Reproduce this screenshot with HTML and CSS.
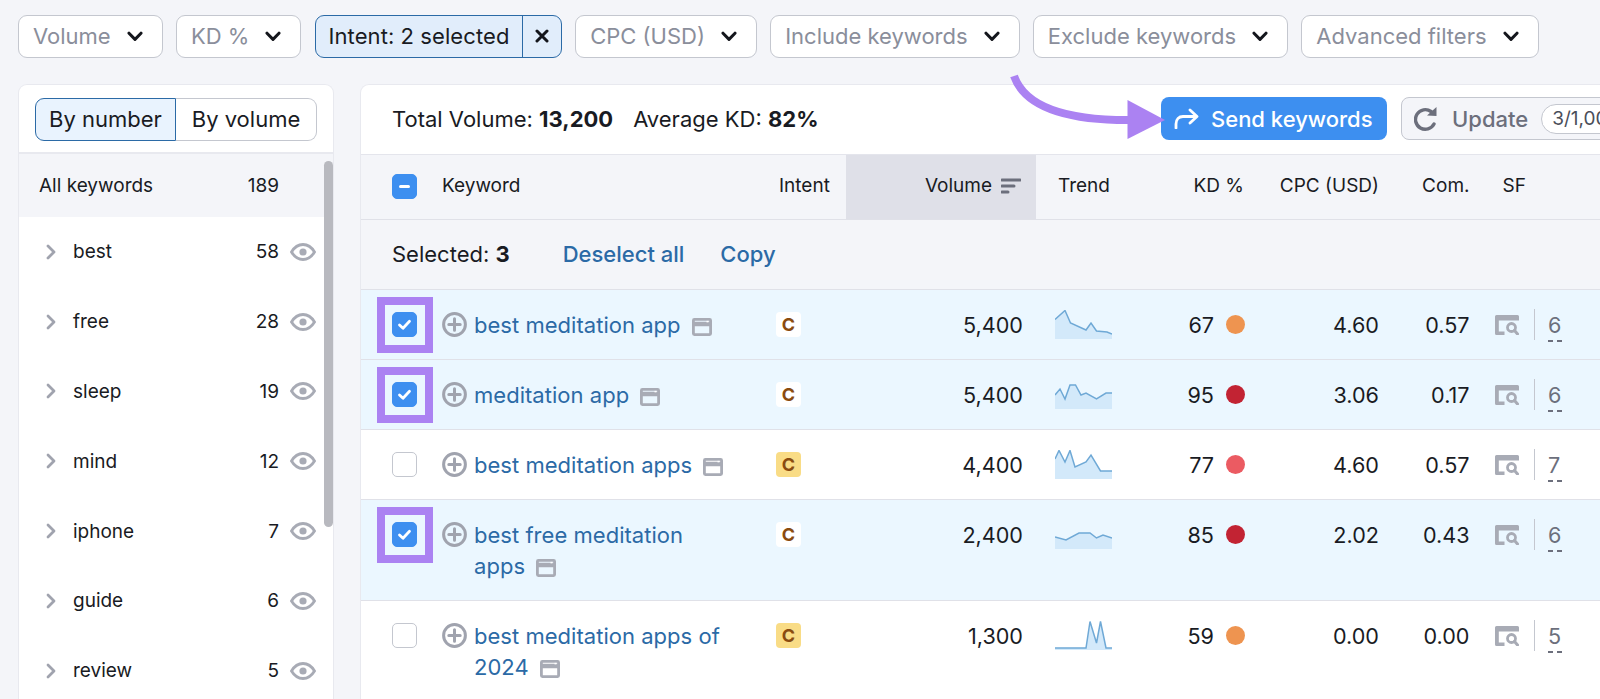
FILE: index.html
```html
<!DOCTYPE html>
<html lang="en">
<head>
<meta charset="utf-8">
<title>Keyword Magic Tool</title>
<link rel="stylesheet" href="styles.css">
</head>
<body>
<svg class="defs" width="0" height="0" aria-hidden="true">
  <symbol id="chev" viewBox="0 0 16 11"><path d="M2 2.200 8 8.400l6-6.200" fill="none" stroke="currentColor" stroke-width="3" stroke-linecap="round" stroke-linejoin="round"/></symbol>
  <symbol id="right" viewBox="0 0 10 16"><path d="M2 2l6 6-6 6" fill="none" stroke="currentColor" stroke-width="2.800" stroke-linecap="round" stroke-linejoin="round"/></symbol>
  <symbol id="eye" viewBox="0 0 26 18"><path d="M1.500 9C4.500 4 8.500 1.500 13 1.500S21.500 4 24.500 9C21.500 14 17.500 16.500 13 16.500S4.500 14 1.500 9Z" fill="none" stroke="currentColor" stroke-width="2.800"/><circle cx="13" cy="9" r="3.600" fill="currentColor"/></symbol>
  <symbol id="plus" viewBox="0 0 25 25"><circle cx="12.500" cy="12.500" r="10.900" fill="none" stroke="currentColor" stroke-width="3"/><path d="M12.500 6.800v11.400M6.800 12.500h11.400" stroke="currentColor" stroke-width="3" stroke-linecap="round"/></symbol>
  <symbol id="win" viewBox="0 0 20 18"><rect x="1.400" y="1.400" width="17.200" height="15.200" rx="1" fill="none" stroke="currentColor" stroke-width="2.800"/><path d="M1 6h18" stroke="currentColor" stroke-width="4.500"/><path d="M14.500 3.600h2" stroke="#fff" stroke-width="1.500"/></symbol>
  <symbol id="serp" viewBox="0 0 24 20"><path d="M0 1.500A1.500 1.500 0 0 1 1.500 0h21A1.500 1.500 0 0 1 24 1.500V5.500H3.800v10.900H9.500V20H1.500A1.500 1.500 0 0 1 0 18.500Z" fill="currentColor"/><circle cx="16.500" cy="12.500" r="4" fill="none" stroke="currentColor" stroke-width="2.800"/><path d="M19.500 15.500l3 3.500" stroke="currentColor" stroke-width="3" stroke-linecap="round"/></symbol>
  <symbol id="tick" viewBox="0 0 25 25"><path d="M7.500 13l3.500 3.300 6.500-7" fill="none" stroke="#fff" stroke-width="2.800" stroke-linecap="round" stroke-linejoin="round"/></symbol>
</svg>

<div class="page">
  <header class="filters">
    <div class="filter"><span>Volume</span><svg class="chev"><use href="#chev"/></svg></div>
    <div class="filter"><span>KD %</span><svg class="chev"><use href="#chev"/></svg></div>
    <div class="filter filter-on"><span class="on-label">Intent: 2 selected</span><span class="on-clear"><svg class="x" viewBox="0 0 14 14"><path d="M2 2l10 10M12 2 2 12" stroke="#14161c" stroke-width="3" stroke-linecap="round"/></svg></span></div>
    <div class="filter"><span>CPC (USD)</span><svg class="chev"><use href="#chev"/></svg></div>
    <div class="filter"><span>Include keywords</span><svg class="chev"><use href="#chev"/></svg></div>
    <div class="filter"><span>Exclude keywords</span><svg class="chev"><use href="#chev"/></svg></div>
    <div class="filter"><span>Advanced filters</span><svg class="chev"><use href="#chev"/></svg></div>
  </header>

  <div class="columns">
    <aside class="side">
      <div class="side-top">
        <div class="seg seg-on">By number</div>
        <div class="seg">By volume</div>
      </div>
      <div class="side-all"><span class="side-all-name">All keywords</span><span class="side-all-num">189</span></div>
      <div class="side-row"><svg class="side-chev"><use href="#right"/></svg><span class="side-name">best</span><span class="side-num">58</span><svg class="eye"><use href="#eye"/></svg></div>
      <div class="side-row"><svg class="side-chev"><use href="#right"/></svg><span class="side-name">free</span><span class="side-num">28</span><svg class="eye"><use href="#eye"/></svg></div>
      <div class="side-row"><svg class="side-chev"><use href="#right"/></svg><span class="side-name">sleep</span><span class="side-num">19</span><svg class="eye"><use href="#eye"/></svg></div>
      <div class="side-row"><svg class="side-chev"><use href="#right"/></svg><span class="side-name">mind</span><span class="side-num">12</span><svg class="eye"><use href="#eye"/></svg></div>
      <div class="side-row"><svg class="side-chev"><use href="#right"/></svg><span class="side-name">iphone</span><span class="side-num">7</span><svg class="eye"><use href="#eye"/></svg></div>
      <div class="side-row"><svg class="side-chev"><use href="#right"/></svg><span class="side-name">guide</span><span class="side-num">6</span><svg class="eye"><use href="#eye"/></svg></div>
      <div class="side-row"><svg class="side-chev"><use href="#right"/></svg><span class="side-name">review</span><span class="side-num">5</span><svg class="eye"><use href="#eye"/></svg></div>
      <div class="scroll-thumb"></div>
    </aside>

    <main class="main">
      <div class="summary">
        <span class="sum-a">Total Volume: <b>13,200</b></span>
        <span class="sum-b">Average KD: <b>82%</b></span>
        <div class="summary-actions">
          <button class="send">
            <svg class="send-ico" viewBox="0 0 25 21"><path d="M2 20v-4c0-5 3-7.500 7-7.500h13M16 2l7 6.500-7 6.500" fill="none" stroke="#fff" stroke-width="2.800" stroke-linecap="round" stroke-linejoin="round"/></svg>
            Send keywords
          </button>
          <button class="update">
            <svg class="upd-ico" viewBox="0 0 24 26"><path d="M20 18a9.800 9.800 0 1 1-3-12.500" fill="none" stroke="#6c6f7c" stroke-width="3.400" stroke-linecap="round"/><path d="M13 9.500 22.500 10V1Z" fill="#6c6f7c"/></svg>
            <span class="upd-text">Update</span>
            <span class="upd-pill">3/1,000</span>
          </button>
        </div>
      </div>

      <div class="grid grid-head">
        <div class="c-check"><span class="box box-on"><i class="minus"></i></span></div>
        <div class="c-kw">Keyword</div>
        <div class="c-int">Intent</div>
        <div class="c-vol c-sorted">Volume <svg class="sort" viewBox="0 0 20 16"><path d="M1 2h18M1 8h12M1 14h6" stroke="#6c6f7c" stroke-width="3" stroke-linecap="round"/></svg></div>
        <div class="c-trend">Trend</div>
        <div class="c-kd">KD %</div>
        <div class="c-cpc">CPC (USD)</div>
        <div class="c-com">Com.</div>
        <div class="c-sf">SF</div>
      </div>

      <div class="selbar">
        <span class="sel-count">Selected: <b>3</b></span>
        <a class="sel-link">Deselect all</a>
        <a class="sel-link">Copy</a>
      </div>

      <div class="grid row row-sel">
        <div class="c-check"><span class="hilite"></span><span class="box box-on"><svg class="tick"><use href="#tick"/></svg></span></div>
        <div class="c-kw"><svg class="plus"><use href="#plus"/></svg><a class="kw">best meditation app <svg class="win"><use href="#win"/></svg></a></div>
        <div class="c-int"><span class="badge">C</span></div>
        <div class="c-vol">5,400</div>
        <div class="c-trend"><svg class="spark" viewBox="0 0 57 29"><path class="area" d="M0 9.500 10 .5l5.500 12.500L31 20l5-7 5.500 8L52 22l5 2v5H0Z"/><path class="line" d="M0 9.500 10 .5l5.500 12.500L31 20l5-7 5.500 8L52 22l5 2"/></svg></div>
        <div class="c-kd">67<i class="dot dot-o"></i></div>
        <div class="c-cpc">4.60</div>
        <div class="c-com">0.57</div>
        <div class="c-sf"><svg class="serp"><use href="#serp"/></svg><i class="vline"></i><span class="sfn">6</span></div>
      </div>

      <div class="grid row row-sel">
        <div class="c-check"><span class="hilite"></span><span class="box box-on"><svg class="tick"><use href="#tick"/></svg></span></div>
        <div class="c-kw"><svg class="plus"><use href="#plus"/></svg><a class="kw">meditation app <svg class="win"><use href="#win"/></svg></a></div>
        <div class="c-int"><span class="badge">C</span></div>
        <div class="c-vol">5,400</div>
        <div class="c-trend"><svg class="spark" viewBox="0 0 57 29"><path class="area" d="M0 15l5-6 5 10 5-14h5.500L26 15l5-2 10.500 6L51 13h6v16H0Z"/><path class="line" d="M0 15l5-6 5 10 5-14h5.500L26 15l5-2 10.500 6L51 13h6"/></svg></div>
        <div class="c-kd">95<i class="dot dot-r"></i></div>
        <div class="c-cpc">3.06</div>
        <div class="c-com">0.17</div>
        <div class="c-sf"><svg class="serp"><use href="#serp"/></svg><i class="vline"></i><span class="sfn">6</span></div>
      </div>

      <div class="grid row">
        <div class="c-check"><span class="box"></span></div>
        <div class="c-kw"><svg class="plus"><use href="#plus"/></svg><a class="kw">best meditation apps <svg class="win"><use href="#win"/></svg></a></div>
        <div class="c-int"><span class="badge badge-y">C</span></div>
        <div class="c-vol">4,400</div>
        <div class="c-trend"><svg class="spark" viewBox="0 0 57 29"><path class="area" d="M0 9 4 .5l6 11.500 5-11.500L20 17l11-5 5-7 9.500 16H57v8H0Z"/><path class="line" d="M0 9 4 .5l6 11.500 5-11.500L20 17l11-5 5-7 9.500 16H57"/></svg></div>
        <div class="c-kd">77<i class="dot dot-p"></i></div>
        <div class="c-cpc">4.60</div>
        <div class="c-com">0.57</div>
        <div class="c-sf"><svg class="serp"><use href="#serp"/></svg><i class="vline"></i><span class="sfn">7</span></div>
      </div>

      <div class="grid row row-sel row-tall">
        <div class="c-check"><span class="hilite"></span><span class="box box-on"><svg class="tick"><use href="#tick"/></svg></span></div>
        <div class="c-kw"><svg class="plus"><use href="#plus"/></svg><a class="kw">best free meditation apps <svg class="win"><use href="#win"/></svg></a></div>
        <div class="c-int"><span class="badge">C</span></div>
        <div class="c-vol">2,400</div>
        <div class="c-trend"><svg class="spark" viewBox="0 0 57 29"><path class="area" d="M0 17l11 3 13-7h11l6.500 5 6.500-3 9 3v11H0Z"/><path class="line" d="M0 17l11 3 13-7h11l6.500 5 6.500-3 9 3"/></svg></div>
        <div class="c-kd">85<i class="dot dot-r"></i></div>
        <div class="c-cpc">2.02</div>
        <div class="c-com">0.43</div>
        <div class="c-sf"><svg class="serp"><use href="#serp"/></svg><i class="vline"></i><span class="sfn">6</span></div>
      </div>

      <div class="grid row row-tall">
        <div class="c-check"><span class="box"></span></div>
        <div class="c-kw"><svg class="plus"><use href="#plus"/></svg><a class="kw">best meditation apps of 2024 <svg class="win"><use href="#win"/></svg></a></div>
        <div class="c-int"><span class="badge badge-y">C</span></div>
        <div class="c-vol">1,300</div>
        <div class="c-trend"><svg class="spark" viewBox="0 0 57 29"><path class="area" d="M0 27h31L35 .5 41.500 22 45.500 .5 51 27h6v2H0Z"/><path class="line" d="M0 27h31L35 .5 41.500 22 45.500 .5 51 27h6"/></svg></div>
        <div class="c-kd">59<i class="dot dot-o"></i></div>
        <div class="c-cpc">0.00</div>
        <div class="c-com">0.00</div>
        <div class="c-sf"><svg class="serp"><use href="#serp"/></svg><i class="vline"></i><span class="sfn">5</span></div>
      </div>
    </main>
  </div>

  <svg class="arrow" viewBox="0 0 160 70" aria-hidden="true">
    <path d="M4 4C14 32 50 49 124 48" fill="none" stroke="#ab82f2" stroke-width="8"/>
    <path d="M117.500 28 155 48 117.500 67Z" fill="#ab82f2"/>
  </svg>
</div>
</body>
</html>
```

FILE: styles.css
```css
* { box-sizing: border-box; }
html, body { margin: 0; padding: 0; }
body {
  background: #f4f5f9;
  color: #191b23;
  font-family: Inter, "Noto Sans", sans-serif;
  font-size: 20px;
  overflow: hidden;
  height: 699px;
}
.defs { position: absolute; }
.page { position: relative; width: 1600px; height: 699px; overflow: hidden; }

.filters { display: flex; gap: 13.2px; padding: 14.5px 0 0 18px; height: 83.5px; }
.filter {
  display: flex; align-items: center; justify-content: space-between;
  height: 43.5px; padding: 0 19px 0 14px;
  background: #fff; border: 1.5px solid #c4c7cf; border-radius: 9px;
  color: #8a8e9b; font-size: 22px; white-space: nowrap;
}
.chev { width: 16px; height: 11px; margin-left: 16px; color: #14161c; }
.filter-on { padding: 0; background: #e1edfb; border-color: #2b6aa6; color: #191b23; }
.on-label { width: 207px; padding-left: 13px; line-height: 40.5px; border-right: 1.5px solid #2b6aa6; letter-spacing: .08px; }
.on-clear { display: flex; justify-content: center; width: 38.5px; }
.x { width: 14px; height: 14px; }

.columns { display: flex; gap: 26px; padding-left: 18px; }

.side {
  position: relative; width: 316px; height: 620px; flex: none;
  background: #fff; border: 1px solid #e8e9ef; border-bottom: 0; border-radius: 9px 9px 0 0;
}
.side-top { display: flex; padding: 13px 16px 13px 16px; height: 69px; border-bottom: 2px solid #e8e9ef; }
.seg {
  flex: 1; height: 43px; line-height: 40px; text-align: center; font-size: 22px;
  border: 1.5px solid #c4c7cf; border-left: 0; border-radius: 0 9px 9px 0;
}
.seg-on { flex: 0 0 141px; background: #e9f3fe; border: 1.5px solid #2b6aa6; border-radius: 9px 0 0 9px; }
.side-all {
  display: flex; align-items: center; height: 63.5px; padding-left: 20px;
  background: #f4f5f9; font-size: 19px;
}
.side-all-name { width: 204px; }
.side-all-num { width: 36px; text-align: right; }
.side-row { display: flex; align-items: center; height: 69.8px; padding-left: 27px; font-size: 19px; }
.side-chev { width: 10px; height: 16px; color: #a0a3ae; }
.side-name { width: 137px; margin-left: 17px; }
.side-num { width: 69px; text-align: right; }
.eye { width: 26px; height: 18px; margin-left: 11px; color: #a8abb5; }
.scroll-thumb {
  position: absolute; left: 305px; top: 76px; width: 9px; height: 366px;
  background: #b8b9bf; border-radius: 5px;
}

.main { flex: none; width: 1240px; height: 620px; background: #fff; border-top: 1px solid #e8e9ef; border-left: 1px solid #e8e9ef; border-radius: 9px 0 0 0; }
.summary { position: relative; display: flex; align-items: center; height: 70px; padding-left: 31px; font-size: 22px; border-bottom: 1px solid #e4e5ec; }
.summary b { font-weight: 700; }
.sum-b { margin-left: 20px; }
.summary-actions { position: absolute; left: 800px; top: 12.5px; display: flex; gap: 14px; }
.send, .update { font-family: inherit; height: 43px; white-space: nowrap; display: flex; align-items: center; }
.send {
  width: 226px; padding: 0 0 0 13px; border: 0; border-radius: 8px;
  background: #3d8ff0; color: #fff; font-size: 22px; font-weight: 500;
}
.send-ico { width: 25px; height: 21px; margin-right: 12px; }
.update {
  width: 240px; padding: 0 0 0 12px; background: #f4f5f9; border: 1.5px solid #c4c7cf; border-radius: 8px;
  color: #6c6f7c; font-size: 22px; font-weight: 500;
}
.upd-ico { width: 24px; height: 26px; }
.upd-text { margin-left: 14px; }
.upd-pill { margin-left: 13px; padding: 0 14px 0 10px; height: 30px; line-height: 27px; border: 1.5px solid #c4c7cf; border-radius: 15px; background: #fff; color: #4b4e5a; font-size: 19px; font-weight: 400; }

.grid {
  display: grid;
  grid-template-columns: 81px 334px 70px 190px 114px 95px 134px 90.500px 131px;
  align-items: start;
}
.grid > div { height: 70px; display: flex; align-items: center; }
.grid-head { height: 65px; background: #f4f5f9; font-size: 19px; border-bottom: 1px solid #e0e1e8; }
.grid-head > div { height: 64px; }
.grid-head > div:not(.c-check) { padding-bottom: 1.5px; }
.grid-head .c-kw { padding-top: 0; align-items: center !important; }
.grid-head .c-int { padding-left: 3px; }
.grid-head .c-vol { background: #dfe0e8; padding-right: 15px; }
.grid-head .c-trend { padding-left: 22px; }
.grid-head .c-kd { padding-right: 1px; }
.grid-head .c-sf { padding-left: 33px; }
.sort { width: 20px; height: 16px; margin-left: 9px; }

.selbar { display: flex; align-items: center; height: 70px; padding: 0 0 0 31px; background: #f4f5f9; font-size: 22px; border-bottom: 1px solid #e0e1e8; }
.sel-count b { font-weight: 700; }
.sel-link { color: #2b6aa6; font-weight: 500; margin-left: 36px; }
.sel-link:first-of-type { margin-left: 53px; }

.row { height: 70px; background: #fff; font-size: 21.600px; border-bottom: 1.500px solid #e0e1e8; }
.row-sel { background: #ebf7ff; }
.row-tall { height: 101px; }
.c-check { position: relative; padding-left: 30.500px; }
.c-kw { align-items: flex-start !important; padding-top: 22.500px; }
.c-vol { justify-content: flex-end; padding-right: 13px; }
.c-trend { padding-left: 19px; }
.c-kd, .c-cpc, .c-com { justify-content: flex-end; }
.c-sf { padding-left: 25.500px; }

.box {
  display: flex; align-items: center; justify-content: center;
  width: 25px; height: 25px; background: #fff;
  border: 1.500px solid #c4c7cf; border-radius: 5px;
}
.box-on { background: #3d8ff0; border-color: #3d8ff0; }
.minus { width: 11px; height: 3px; background: #fff; border-radius: 2px; }
.tick { width: 25px; height: 25px; flex: none; }
.hilite { position: absolute; left: 15.500px; top: 7px; width: 56px; height: 56px; border: 8px solid #ab82f2; }

.plus { width: 25px; height: 25px; flex: none; color: #a0a3ae; margin-right: 7px; }
.kw { width: 262px; color: #2b6aa6; line-height: 31.500px; margin-top: -2.500px; font-size: 22px; letter-spacing: .03px; }
.win { width: 20px; height: 18px; margin-left: 5px; color: #a8abb5; vertical-align: -3px; }

.badge {
  width: 25px; height: 25px; line-height: 25px; text-align: center; background: #fff;
  border-radius: 4px; color: #8a4b10; font-size: 18px; font-weight: 700;
}
.badge-y { background: #f9dc86; }

.spark { width: 57px; height: 29px; }
.area { fill: #d3e9fa; }
.line { fill: none; stroke: #6fa9d6; stroke-width: 1.500; }

.dot { display: block; width: 19px; height: 19px; border-radius: 50%; margin-left: 12px; }
.dot-o { background: #ee9450; }
.dot-r { background: #c22333; }
.dot-p { background: #eb5b62; }

.serp { width: 24px; height: 20px; color: #a8abb5; }
.vline { display: block; width: 1px; height: 31px; margin-left: 15px; background: #c4c7cf; }
.sfn { position: relative; margin-left: 13px; color: #6c6f7c; }
.sfn::after {
  content: ""; position: absolute; left: 0; width: 14px; bottom: -4px; height: 1.500px;
  background: repeating-linear-gradient(90deg, #6c6f7c 0 5px, transparent 5px 9px);
}

.arrow { position: absolute; left: 1010px; top: 72px; width: 160px; height: 70px; }
```
